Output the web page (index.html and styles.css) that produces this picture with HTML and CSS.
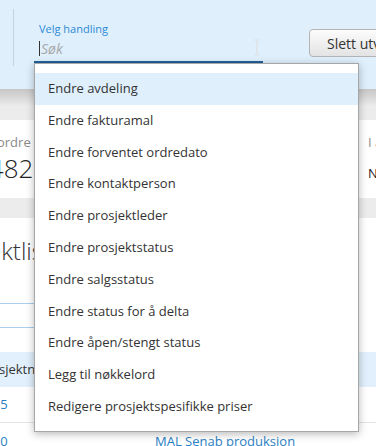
FILE: index.html
```html
<!DOCTYPE html>
<html lang="no">
<head>
<meta charset="utf-8">
<title>Prosjektliste</title>
<link rel="stylesheet" href="styles.css">
</head>
<body>
<div class="page">
  <header class="toolbar">
    <div class="divider"></div>
    <div class="field">
      <div class="field-label">Velg handling</div>
      <div class="field-input"><span class="caret"></span><span class="placeholder">Søk</span></div>
      <svg class="ibeam" width="8" height="17" viewBox="0 0 8 17"><path d="M1 1h2.5l.5.5.5-.5H7M4 1.5v14M1 16h2.5l.5-.5.5.5H7" fill="none" stroke="#e2e2e2" stroke-width="1.2"/></svg>
    </div>
    <button class="btn">Slett utvalgte</button>
  </header>

  <div class="stats">
    <div class="card card-left">
      <div class="card-label">Antall ordre</div>
      <div class="card-value">1482</div>
    </div>
    <div class="card card-right">
      <div class="card-label">I arbeid</div>
      <div class="card-text">Nei</div>
    </div>
  </div>

  <section class="list">
    <h1 class="list-title">Prosjektliste</h1>
    <div class="filter-box"></div>
    <div class="grid">
      <div class="cell head">Prosjektnr</div>
      <div class="cell head">Navn</div>
      <div class="cell link row">1005</div>
      <div class="cell row"></div>
      <div class="cell link">1010</div>
      <div class="cell link">MAL Senab produksjon</div>
    </div>
  </section>

  <ul class="menu">
    <li class="active">Endre avdeling</li>
    <li>Endre fakturamal</li>
    <li>Endre forventet ordredato</li>
    <li>Endre kontaktperson</li>
    <li>Endre prosjektleder</li>
    <li>Endre prosjektstatus</li>
    <li>Endre salgsstatus</li>
    <li>Endre status for å delta</li>
    <li>Endre åpen/stengt status</li>
    <li>Legg til nøkkelord</li>
    <li>Redigere prosjektspesifikke priser</li>
  </ul>
</div>
</body>
</html>
```

FILE: styles.css
```css
* { box-sizing: border-box; }
html, body { margin: 0; padding: 0; }
body {
  width: 376px;
  height: 446px;
  overflow: hidden;
  font-family: "Open Sans", "Noto Sans", sans-serif;
  color: #333;
  background: #fff;
}
.page {
  position: relative;
  width: 376px;
  height: 446px;
  overflow: hidden;
}

/* toolbar */
.toolbar {
  height: 89px;
  background: #dfeffc;
  display: flex;
  align-items: flex-start;
  padding-left: 13px;
}
.divider {
  width: 1px;
  height: 57px;
  margin-top: 9px;
  background: #c9d2da;
  flex-shrink: 0;
}
.field {
  position: relative;
  width: 229px;
  flex-shrink: 0;
  margin-left: 20px;
  margin-top: 22px;
  border-bottom: 2px solid #22609a;
}
.field-label {
  padding-left: 5px;
  font-size: 11px;
  line-height: 14px;
  color: #2b8ad6;
}
.field-input {
  height: 25px;
  padding-left: 5px;
  display: flex;
  align-items: center;
  font-size: 14px;
  font-style: italic;
  color: #a8a8a8;
}
.caret {
  width: 1px;
  height: 15px;
  background: #333;
}
.placeholder { margin-left: 1px; }
.ibeam {
  position: absolute;
  left: 219px;
  top: 17px;
}
.btn {
  flex-shrink: 0;
  margin-left: 46px;
  margin-top: 29px;
  height: 28px;
  padding: 0 12px 0 17px;
  border: 1px solid #b4b4b4;
  border-radius: 4px;
  background: linear-gradient(#fcfcfc, #e3e3e3);
  font-family: inherit;
  font-size: 14px;
  color: #333;
  white-space: nowrap;
}

/* stats */
.stats {
  display: flex;
  gap: 8px;
  padding: 31px 0 20px;
  background: linear-gradient(#c6c6c6, #e2e2e2 13px, #ececec 17px);
}
.card {
  background: #fff;
  height: 78px;
  padding: 13px 13px 0;
  white-space: nowrap;
}
.card-left {
  flex-shrink: 0;
  width: 397px;
  margin-left: -57px;
  padding-left: 16px;
}
.card-right { flex: 1; padding-left: 20px; }
.card-label {
  font-size: 13px;
  line-height: 18px;
  color: #8a8a8a;
}
.card-value {
  margin-top: 2px;
  margin-left: 15px;
  font-size: 26px;
  font-weight: 300;
  line-height: 30px;
  color: #222;
}
.card-text {
  margin-top: 13px;
  font-size: 13px;
  line-height: 18px;
  color: #222;
}

/* list */
.list {
  padding-top: 17px;
}
.list-title {
  margin: 0 0 0 -66px;
  font-size: 24px;
  font-weight: 300;
  line-height: 32px;
  color: #333;
  white-space: nowrap;
}
.filter-box {
  margin: 36px 0 0 -40px;
  width: 360px;
  height: 25px;
  border-top: 1px solid #a9cff0;
  border-bottom: 1px solid #a9cff0;
}
.grid {
  margin: 24px 0 0 -40px;
  display: grid;
  grid-template-columns: 195px 1fr;
}
.cell {
  font-size: 13px;
  line-height: 36px;
  white-space: nowrap;
}
.cell:nth-child(odd) { padding-left: 18px; }
.head {
  background: #e1f0fc;
  line-height: 35px;
  color: #333;
}
.row { border-bottom: 1px solid #e4e4e4; line-height: 35px; }
.link { color: #2a7fc4; }

/* dropdown menu */
.menu {
  position: absolute;
  left: 34px;
  top: 63px;
  width: 325px;
  height: 369px;
  margin: 0;
  padding: 9px 0 0;
  list-style: none;
  background: #fff;
  border: 1px solid #a6a6a6;
  box-shadow: 0 2px 8px rgba(0, 0, 0, 0.28);
}
.menu li {
  height: 31.8px;
  line-height: 31.8px;
  padding-left: 13px;
  font-size: 13px;
  color: #333;
  white-space: nowrap;
}
.menu li.active { background: #dfeffc; }
```
